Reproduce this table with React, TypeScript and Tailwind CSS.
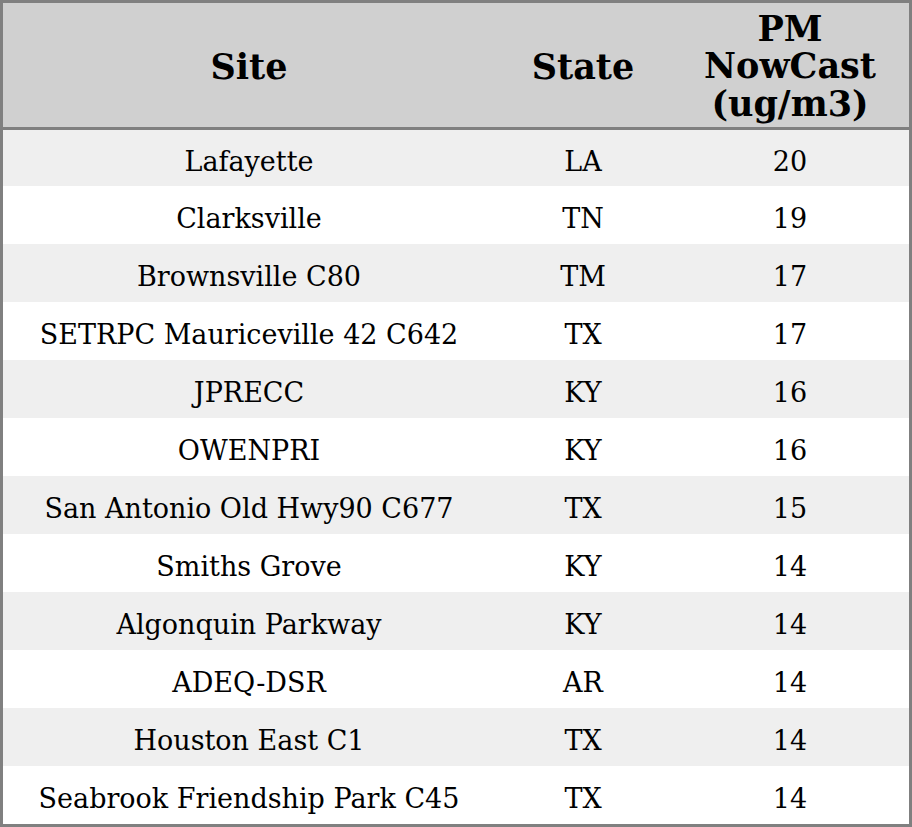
const rows: [string, string, number][] = [
  ['Lafayette', 'LA', 20],
  ['Clarksville', 'TN', 19],
  ['Brownsville C80', 'TM', 17],
  ['SETRPC Mauriceville 42 C642', 'TX', 17],
  ['JPRECC', 'KY', 16],
  ['OWENPRI', 'KY', 16],
  ['San Antonio Old Hwy90 C677', 'TX', 15],
  ['Smiths Grove', 'KY', 14],
  ['Algonquin Parkway', 'KY', 14],
  ['ADEQ-DSR', 'AR', 14],
  ['Houston East C1', 'TX', 14],
  ['Seabrook Friendship Park C45', 'TX', 14],
];

export default function App() {
  return (
    <div className="h-[827px] w-[912px] border-[3px] border-[#808080] bg-white font-['DejaVu_Serif',serif] text-black">
      <table className="h-full w-full table-fixed border-collapse">
        <colgroup>
          <col className="w-[492px]" />
          <col className="w-[176px]" />
          <col />
        </colgroup>
        <thead>
          <tr className="h-[125px] border-b-[3px] border-[#808080] bg-[#d0d0d0] text-[35px] font-bold leading-[37.5px]">
            <th className="pt-[4px]">Site</th>
            <th className="pt-[4px]">State</th>
            <th className="pt-[2px]">
              PM
              <br />
              NowCast
              <br />
              (ug/m3)
            </th>
          </tr>
        </thead>
        <tbody className="text-[27px]">
          {rows.map(([site, state, value], i) => (
            <tr key={site} className={i % 2 === 0 ? 'bg-[#efefef]' : 'bg-white'}>
              <td className="h-[57.75px] pt-[8px] text-center">{site}</td>
              <td className="pt-[8px] text-center">{state}</td>
              <td className="pt-[8px] text-center">{value}</td>
            </tr>
          ))}
        </tbody>
      </table>
    </div>
  );
}
